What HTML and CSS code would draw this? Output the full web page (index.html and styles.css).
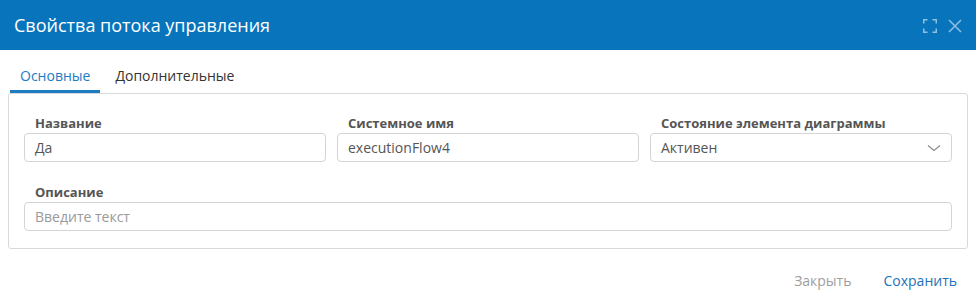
FILE: index.html
```html
<!DOCTYPE html>
<html lang="ru">
<head>
<meta charset="utf-8">
<title>Свойства потока управления</title>
<link rel="stylesheet" href="styles.css">
</head>
<body>
<div class="dialog">
  <header class="dlg-header">
    <h1 class="dlg-title">Свойства потока управления</h1>
    <div class="dlg-tools">
      <svg class="tool-icon" width="14" height="14" viewBox="0 0 14 14" fill="none" stroke="currentColor" stroke-width="1.5">
        <path d="M0.75 4.5V0.75H4.5M9.5 0.75H13.25V4.5M13.25 9.5V13.25H9.5M4.5 13.25H0.75V9.5"/>
      </svg>
      <svg class="tool-icon" width="14" height="14" viewBox="0 0 14 14" fill="none" stroke="currentColor" stroke-width="1.5">
        <path d="M1 1L13 13M13 1L1 13"/>
      </svg>
    </div>
  </header>

  <nav class="tabs">
    <div class="tab tab-active">Основные</div>
    <div class="tab">Дополнительные</div>
  </nav>

  <section class="panel">
    <div class="row">
      <div class="field">
        <div class="label">Название</div>
        <div class="input">Да</div>
      </div>
      <div class="field">
        <div class="label">Системное имя</div>
        <div class="input">executionFlow4</div>
      </div>
      <div class="field">
        <div class="label">Состояние элемента диаграммы</div>
        <div class="input select">
          <span>Активен</span>
          <svg class="chevron" width="14" height="8" viewBox="0 0 14 8" fill="none" stroke="#8a8a8a" stroke-width="1.1">
            <path d="M1 1.5L7 6.5L13 1.5"/>
          </svg>
        </div>
      </div>
    </div>
    <div class="row">
      <div class="field">
        <div class="label">Описание</div>
        <div class="input placeholder">Введите текст</div>
      </div>
    </div>
  </section>

  <footer class="dlg-footer">
    <button class="btn btn-close">Закрыть</button>
    <button class="btn btn-save">Сохранить</button>
  </footer>
</div>
</body>
</html>
```

FILE: styles.css
```css
* { box-sizing: border-box; }

html, body {
  margin: 0;
  padding: 0;
  background: #ffffff;
}

body {
  font-family: "Open Sans", "Noto Sans", "Liberation Sans", sans-serif;
  color: #333333;
  width: 976px;
  height: 302px;
  overflow: hidden;
}

.dlg-header {
  height: 50px;
  background: #0874bb;
  display: flex;
  align-items: center;
  justify-content: space-between;
  padding: 0 14px 0 14px;
}

.dlg-title {
  margin: 0;
  font-size: 18px;
  font-weight: 400;
  color: #ffffff;
  line-height: 24px;
}

.dlg-tools {
  display: flex;
  align-items: center;
  gap: 11px;
  color: #8fbfe2;
  padding-top: 1px;
}

.tool-icon { display: block; }

.tabs {
  display: flex;
  margin: 10px 0 0 10px;
  gap: 5px;
}

.tab {
  font-size: 14px;
  line-height: 20px;
  padding: 6px 10px 4px;
  border-bottom: 3px solid transparent;
  color: #333333;
}

.tab-active {
  color: #1d7cc2;
  border-bottom-color: #1d7cc2;
}

.panel {
  margin: 0 8px;
  border: 1px solid #d9d9d9;
  border-radius: 3px;
  padding: 19px 15px 17px;
  display: flex;
  flex-direction: column;
  gap: 20px;
}

.row {
  display: flex;
  gap: 11px;
}

.field {
  flex: 1 1 0;
  min-width: 0;
}

.label {
  font-size: 13px;
  font-weight: 700;
  line-height: 20px;
  color: #555555;
  padding-left: 11px;
}

.input {
  height: 29px;
  border: 1px solid #d4d4d4;
  border-radius: 4px;
  padding: 0 10px;
  font-size: 14px;
  line-height: 27px;
  color: #555555;
  display: flex;
  align-items: center;
  justify-content: space-between;
}

.placeholder { color: #9a9a9a; }

.chevron { display: block; }

.dlg-footer {
  display: flex;
  justify-content: flex-end;
  gap: 12px;
  padding: 22px 9px 0 0;
}

.btn {
  background: none;
  border: none;
  font-family: inherit;
  font-size: 14px;
  line-height: 20px;
  padding: 0 10px;
  cursor: pointer;
}

.btn-close { color: #9e9e9e; }
.btn-save { color: #1d72b8; }
```
